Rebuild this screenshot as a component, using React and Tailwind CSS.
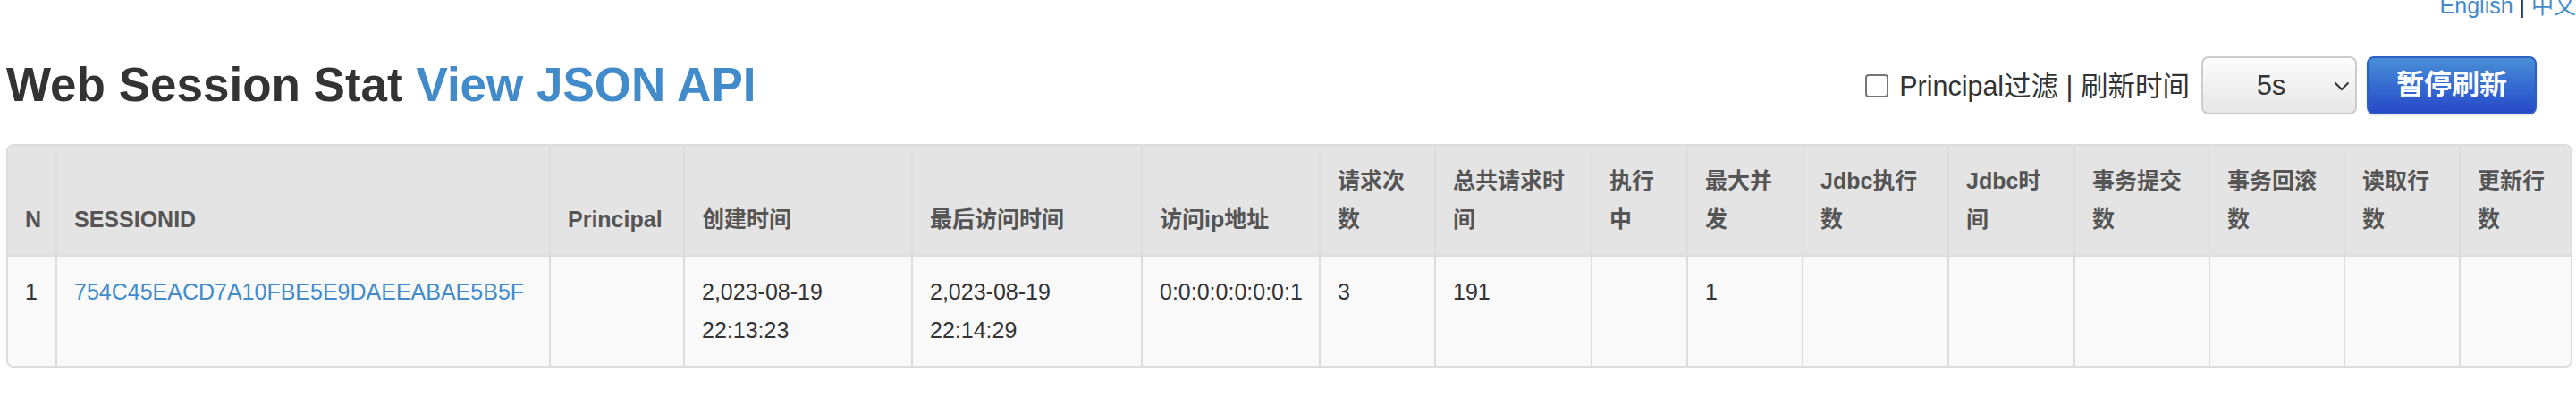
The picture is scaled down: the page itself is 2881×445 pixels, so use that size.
import React from 'react';

const FONT = "font-['Liberation_Sans','Noto_Sans_CJK_SC',sans-serif]";

const COLUMNS = [
  { label: 'N', w: 'w-[54px]' },
  { label: 'SESSIONID', w: 'w-[552px]' },
  { label: 'Principal', w: 'w-[150px]' },
  { label: '创建时间', w: 'w-[255px]' },
  { label: '最后访问时间', w: 'w-[257px]' },
  { label: '访问ip地址', w: 'w-[199px]' },
  { label: '请求次数', w: 'w-[129px]' },
  { label: '总共请求时间', w: 'w-[175px]' },
  { label: '执行中', w: 'w-[107px]' },
  { label: '最大并发', w: 'w-[129px]' },
  { label: 'Jdbc执行数', w: 'w-[163px]' },
  { label: 'Jdbc时间', w: 'w-[141px]' },
  { label: '事务提交数', w: 'w-[151px]' },
  { label: '事务回滚数', w: 'w-[151px]' },
  { label: '读取行数', w: 'w-[129px]' },
  { label: '更新行数', w: 'w-[124px]' },
];

const ROWS = [
  {
    n: 1,
    sessionId: '754C45EACD7A10FBE5E9DAEEABAE5B5F',
    principal: '',
    created: '2,023-08-19 22:13:23',
    lastAccess: '2,023-08-19 22:14:29',
    ip: '0:0:0:0:0:0:0:1',
    requests: 3,
    requestTime: 191,
    running: '',
    concurrent: 1,
    jdbcCount: '',
    jdbcTime: '',
    commits: '',
    rollbacks: '',
    reads: '',
    updates: '',
  },
];

function Chevron() {
  return (
    <svg width="18" height="11" viewBox="0 0 18 11" className="absolute right-[8px] top-[28px] pointer-events-none">
      <polyline points="1.5,1.5 9,9 16.5,1.5" fill="none" stroke="#333" strokeWidth="2" />
    </svg>
  );
}

export default function App() {
  const cell = 'px-[19px] py-[18px] border-l-2 border-[#dddddd] first:border-l-0 text-left';

  return (
    <div className={`${FONT} w-[2881px] h-[445px] bg-white text-[#333] overflow-hidden`}>
      {/* language switch */}
      <div className="-mt-[15px] h-[43px] text-right text-[25px] leading-[43px]">
        <a className="text-[#428bca]">English</a> | <a className="text-[#428bca]">中文</a>
      </div>

      {/* title + controls */}
      <div className="mt-[35px] flex items-center h-[65px]">
        <h3 className="pl-[7px] -mt-[2px] text-[53px] leading-[65px] font-bold text-[#333]">
          Web Session Stat <a className="text-[#428bca]">View JSON API</a>
        </h3>
        <div className="ml-auto mr-[44px] flex items-center">
          <input
            type="checkbox"
            className="appearance-none w-[26px] h-[26px] border-2 border-[#767676] rounded-[4px] bg-white"
          />
          <span className="ml-[12px] text-[30.5px] leading-[40px] text-[#333]">Principal过滤 | 刷新时间</span>
          <div className="relative ml-[13px] w-[174px] h-[65px]">
            <select className="appearance-none w-full h-full pl-[60px] text-[30.5px] text-[#333] border-2 border-[#cccccc] rounded-[8px] bg-gradient-to-b from-[#fdfdfd] to-[#e6e6e6]">
              <option>5s</option>
              <option>10s</option>
              <option>30s</option>
            </select>
            <Chevron />
          </div>
          <button className="ml-[11px] w-[190px] h-[65px] rounded-[8px] border-2 border-[#2d5fc0] bg-gradient-to-b from-[#4a8ed6] to-[#2947c9] text-white text-[31px] font-bold shadow-[0_1px_2px_rgba(0,0,0,0.15)]">
            暂停刷新
          </button>
        </div>
      </div>

      {/* session table */}
      <div className="mt-[33px] ml-[7px] w-[2870px] border-2 border-[#dddddd] rounded-[8px] overflow-hidden">
        <table className="w-full table-fixed border-collapse text-[25px] leading-[43px]">
          <colgroup>
            {COLUMNS.map(c => (
              <col key={c.label} className={c.w} />
            ))}
          </colgroup>
          <thead>
            <tr className="bg-[#e4e4e4] border-b-2 border-[#dddddd]">
              {COLUMNS.map(c => (
                <th key={c.label} className={`${cell} align-bottom font-bold text-[#555]`}>
                  {c.label}
                </th>
              ))}
            </tr>
          </thead>
          <tbody>
            {ROWS.map(r => (
              <tr key={r.sessionId} className="bg-[#f9f9f9] align-top">
                <td className={cell}>{r.n}</td>
                <td className={cell}>
                  <a className="text-[#428bca]">{r.sessionId}</a>
                </td>
                <td className={cell}>{r.principal}</td>
                <td className={cell}>{r.created}</td>
                <td className={cell}>{r.lastAccess}</td>
                <td className={cell}>{r.ip}</td>
                <td className={cell}>{r.requests}</td>
                <td className={cell}>{r.requestTime}</td>
                <td className={cell}>{r.running}</td>
                <td className={cell}>{r.concurrent}</td>
                <td className={cell}>{r.jdbcCount}</td>
                <td className={cell}>{r.jdbcTime}</td>
                <td className={cell}>{r.commits}</td>
                <td className={cell}>{r.rollbacks}</td>
                <td className={cell}>{r.reads}</td>
                <td className={cell}>{r.updates}</td>
              </tr>
            ))}
          </tbody>
        </table>
      </div>
    </div>
  );
}
